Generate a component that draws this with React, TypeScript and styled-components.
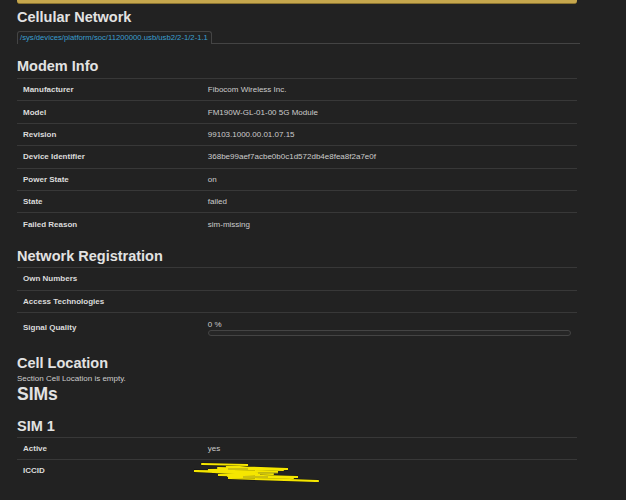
import styled, { createGlobalStyle } from "styled-components";

const Global = createGlobalStyle`
  html, body {
    margin: 0;
    background: #222222;
    font-family: "Liberation Sans", Arial, sans-serif;
  }
`;

const Page = styled.div`
  width: 560px;
  margin-left: 17px;
  color: #dddddd;
`;

const GoldBar = styled.div`
  height: 3px;
  background: #c6a74d;
  border-bottom: 1px solid #8a7330;
  border-radius: 0 0 3px 3px;
`;

const Heading = styled.h2<{ $size?: number; $top?: number }>`
  font-size: ${(p) => p.$size ?? 14.5}px;
  line-height: 18px;
  font-weight: bold;
  color: #e2e2e2;
  margin: ${(p) => p.$top ?? 12}px 0 0 0;
`;

const Tabs = styled.div`
  display: flex;
  margin-top: 5px;
  width: 563px;
  border-bottom: 1px solid #444444;
`;

const Tab = styled.div`
  font-size: 7.7px;
  line-height: 12px;
  color: #3a9fd0;
  padding: 0 3px 0 2px;
  border: 1px solid #444444;
  border-bottom: none;
  border-radius: 3px 3px 0 0;
  margin-bottom: -1px;
  background: #222222;
`;

const Table = styled.table<{ $gap?: number }>`
  width: 100%;
  border-collapse: collapse;
  margin-top: ${(p) => p.$gap ?? 2}px;
  font-size: 8px;
`;

const Row = styled.tr`
  & + & td {
    border-top: 1px solid #383838;
  }
  &:first-child td {
    border-top: 1px solid #383838;
  }
`;

const Label = styled.td`
  width: 33%;
  height: 22.4px;
  padding: 0 6px;
  font-weight: bold;
  color: #dcdcdc;
  box-sizing: border-box;
`;

const Value = styled.td<{ $tall?: boolean }>`
  height: ${(p) => (p.$tall ? 29 : 22.4)}px;
  padding: 0 6px;
  color: #cccccc;
  box-sizing: border-box;
`;

const Percent = styled.div`
  line-height: 9px;
  margin-top: 2px;
`;

const Progress = styled.div`
  height: 4px;
  margin-top: 1px;
  border: 1px solid #444444;
  border-radius: 3px;
  background: #262626;
`;

const Note = styled.div`
  font-size: 8px;
  line-height: 10px;
  margin-top: 2px;
  color: #cccccc;
`;

const Scribble = () => (
  <svg width="140" height="22" viewBox="0 0 140 22" style={{ display: "block", marginLeft: -20 }}>
    <g stroke="#111" strokeWidth="3" fill="none" strokeLinecap="round">
      <path d="M14 4 L60 5 L38 7 L100 9 L20 10 L90 12 L6 11 L72 14 L30 15 L110 17 L40 18 L130 21" />
    </g>
    <g stroke="#f5e600" strokeWidth="2.2" fill="none" strokeLinecap="round">
      <path d="M14 4 L60 5 L38 7 L100 9 L20 10 L90 12 L6 11 L72 14 L30 15 L110 17 L40 18 L130 21" />
      <path d="M30 8 L95 10 M25 12 L85 14 M40 16 L105 18" />
    </g>
    <g stroke="#a09a20" strokeWidth="1" fill="none">
      <path d="M40 9 L60 9 M70 13 L90 13 M55 17 L80 17" />
    </g>
  </svg>
);

type Item = [string, string];

const modem: Item[] = [
  ["Manufacturer", "Fibocom Wireless Inc."],
  ["Model", "FM190W-GL-01-00 5G Module"],
  ["Revision", "99103.1000.00.01.07.15"],
  ["Device Identifier", "368be99aef7acbe0b0c1d572db4e8fea8f2a7e0f"],
  ["Power State", "on"],
  ["State", "failed"],
  ["Failed Reason", "sim-missing"],
];

export default function App() {
  return (
    <>
      <Global />
      <Page>
        <GoldBar />
        <Heading $top={4}>Cellular Network</Heading>
        <Tabs>
          <Tab>/sys/devices/platform/soc/11200000.usb/usb2/2-1/2-1.1</Tab>
        </Tabs>
        <Heading $top={13}>Modem Info</Heading>
        <Table $gap={3}>
          <tbody>
            {modem.map(([k, v]) => (
              <Row key={k}>
                <Label>{k}</Label>
                <Value>{v}</Value>
              </Row>
            ))}
          </tbody>
        </Table>
        <Heading $top={12}>Network Registration</Heading>
        <Table>
          <tbody>
            <Row>
              <Label>Own Numbers</Label>
              <Value></Value>
            </Row>
            <Row>
              <Label>Access Technologies</Label>
              <Value></Value>
            </Row>
            <Row>
              <Label>Signal Quality</Label>
              <Value $tall>
                <Percent>0 %</Percent>
                <Progress />
              </Value>
            </Row>
          </tbody>
        </Table>
        <Heading $top={12}>Cell Location</Heading>
        <Note>Section Cell Location is empty.</Note>
        <Heading $size={17.5} $top={1}>SIMs</Heading>
        <Heading $top={14}>SIM 1</Heading>
        <Table $gap={2}>
          <tbody>
            <Row>
              <Label>Active</Label>
              <Value>yes</Value>
            </Row>
            <Row>
              <Label>ICCID</Label>
              <Value>
                <Scribble />
              </Value>
            </Row>
          </tbody>
        </Table>
      </Page>
    </>
  );
}
